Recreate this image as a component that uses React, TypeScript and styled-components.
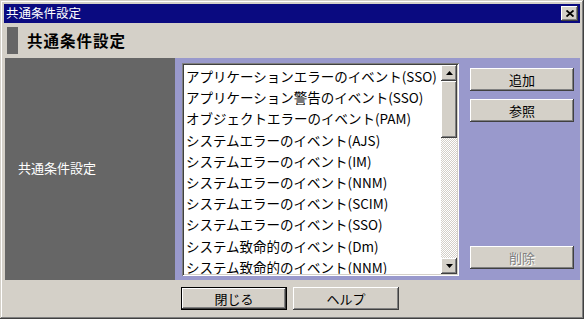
import React from "react";
import styled, { createGlobalStyle, css } from "styled-components";

const GlobalStyle = createGlobalStyle`
  html, body { margin: 0; padding: 0; background: #d4d0c8; }
  body { font-family: "Noto Sans CJK JP", "Noto Sans", sans-serif; }
  * { box-sizing: border-box; }
`;

const FONT = `"Noto Sans CJK JP", "Noto Sans", sans-serif`;

const Window = styled.div`
  width: 584px;
  height: 319px;
  background: #d4d0c8;
  padding: 4px 4px 4px 4px;
  display: flex;
  flex-direction: column;
  box-shadow: inset -1px -1px #404040, inset 1px 1px #d4d0c8,
    inset -2px -2px #808080, inset 2px 2px #ffffff;
  font-family: ${FONT};
`;

const TitleBar = styled.div`
  height: 19px;
  background: #0a0a80;
  display: flex;
  align-items: center;
  justify-content: space-between;
  padding: 0 2px 0 2px;
`;

const TitleText = styled.span`
  color: #ffffff;
  font-size: 12.5px;
  line-height: 1;
`;

const raised = css`
  background: #d4d0c8;
  box-shadow: inset -1px -1px #404040, inset 1px 1px #ffffff,
    inset -2px -2px #808080, inset 2px 2px #d4d0c8;
`;

const CloseButton = styled.div`
  ${raised};
  width: 17px;
  height: 15px;
  display: flex;
  align-items: center;
  justify-content: center;
`;

const Header = styled.div`
  height: 32px;
  display: flex;
  align-items: center;
  padding-left: 3px;
  margin-top: 1px;
`;

const HeaderMark = styled.div`
  width: 11px;
  height: 27px;
  background: #666666;
`;

const HeaderTitle = styled.span`
  font-size: 15.5px;
  font-weight: bold;
  margin-left: 9px;
  color: #000;
  letter-spacing: 1px;
`;

const Main = styled.div`
  margin-top: 2px;
  height: 222px;
  display: flex;
  padding-left: 1px;
`;

const LabelPanel = styled.div`
  width: 170px;
  background: #666666;
  display: flex;
  align-items: center;
  padding-left: 13px;
  padding-bottom: 4px;
  color: #ffffff;
  font-size: 13px;
`;

const FieldPanel = styled.div`
  flex: 1;
  background: #9999cc;
  display: flex;
  padding: 5px 4px 4px 7px;
  gap: 11px;
`;

const ListBox = styled.div`
  width: 277px;
  height: 213px;
  background: #ffffff;
  padding: 2px;
  display: flex;
  box-shadow: inset 1px 1px #808080, inset -1px -1px #ffffff,
    inset 2px 2px #404040, inset -2px -2px #d4d0c8;
`;

const Items = styled.div`
  flex: 1;
  overflow: hidden;
  padding-top: 1px;
`;

const Item = styled.div`
  height: 21.2px;
  line-height: 21px;
  font-size: 13.5px;
  padding-left: 2px;
  white-space: nowrap;
  color: #000;
`;

const ScrollBar = styled.div`
  width: 16px;
  display: flex;
  flex-direction: column;
  background-color: #f4f3f1;
  background-image: repeating-conic-gradient(#d4d0c8 0% 25%, #ffffff 0% 50%);
  background-size: 2px 2px;
`;

const ScrollArrow = styled.div`
  ${raised};
  width: 16px;
  height: 16px;
  display: flex;
  align-items: center;
  justify-content: center;
`;

const Thumb = styled.div`
  ${raised};
  width: 16px;
  height: 57px;
`;

const Spacer = styled.div`
  flex: 1;
`;

const ButtonColumn = styled.div`
  width: 104px;
  display: flex;
  flex-direction: column;
  padding-top: 5px;
  padding-bottom: 7px;
`;

const Button = styled.div<{ $disabled?: boolean; $default?: boolean; $w?: number; $mt?: number }>`
  ${raised};
  height: 23px;
  width: ${(p) => (p.$w ? `${p.$w}px` : "100%")};
  margin-top: ${(p) => p.$mt ?? 0}px;
  display: flex;
  align-items: center;
  justify-content: center;
  font-size: 13px;
  color: ${(p) => (p.$disabled ? "#808080" : "#000")};
  text-shadow: ${(p) => (p.$disabled ? "1px 1px #ffffff" : "none")};
  ${(p) =>
    p.$default &&
    css`
      box-shadow: inset -1px -1px #000000, inset 1px 1px #000000,
        inset -2px -2px #404040, inset 2px 2px #ffffff,
        inset -3px -3px #808080, inset 3px 3px #d4d0c8;
    `}
`;

const Footer = styled.div`
  flex: 1;
  display: flex;
  align-items: flex-start;
  padding-top: 7px;
  padding-left: 177px;
  gap: 6px;
`;

const UpArrow = () => (
  <svg width="7" height="4" viewBox="0 0 7 4">
    <path d="M3.5 0 L7 4 L0 4 Z" fill="#000" />
  </svg>
);

const DownArrow = () => (
  <svg width="7" height="4" viewBox="0 0 7 4">
    <path d="M0 0 L7 0 L3.5 4 Z" fill="#000" />
  </svg>
);

const CloseX = () => (
  <svg width="8" height="7" viewBox="0 0 8 7">
    <path d="M0.5 0.5 L7.5 6.5 M7.5 0.5 L0.5 6.5" stroke="#000" strokeWidth="1.8" />
  </svg>
);

const items = [
  "アプリケーションエラーのイベント(SSO)",
  "アプリケーション警告のイベント(SSO)",
  "オブジェクトエラーのイベント(PAM)",
  "システムエラーのイベント(AJS)",
  "システムエラーのイベント(IM)",
  "システムエラーのイベント(NNM)",
  "システムエラーのイベント(SCIM)",
  "システムエラーのイベント(SSO)",
  "システム致命的のイベント(Dm)",
  "システム致命的のイベント(NNM)",
];

export default function App() {
  return (
    <>
      <GlobalStyle />
      <Window>
        <TitleBar>
          <TitleText>共通条件設定</TitleText>
          <CloseButton>
            <CloseX />
          </CloseButton>
        </TitleBar>
        <Header>
          <HeaderMark />
          <HeaderTitle>共通条件設定</HeaderTitle>
        </Header>
        <Main>
          <LabelPanel>共通条件設定</LabelPanel>
          <FieldPanel>
            <ListBox>
              <Items>
                {items.map((t) => (
                  <Item key={t}>{t}</Item>
                ))}
              </Items>
              <ScrollBar>
                <ScrollArrow>
                  <UpArrow />
                </ScrollArrow>
                <Thumb />
                <Spacer />
                <ScrollArrow>
                  <DownArrow />
                </ScrollArrow>
              </ScrollBar>
            </ListBox>
            <ButtonColumn>
              <Button>追加</Button>
              <Button $mt={8}>参照</Button>
              <Spacer />
              <Button $disabled>削除</Button>
            </ButtonColumn>
          </FieldPanel>
        </Main>
        <Footer>
          <Button $default $w={106}>閉じる</Button>
          <Button $w={106}>ヘルプ</Button>
        </Footer>
      </Window>
    </>
  );
}
